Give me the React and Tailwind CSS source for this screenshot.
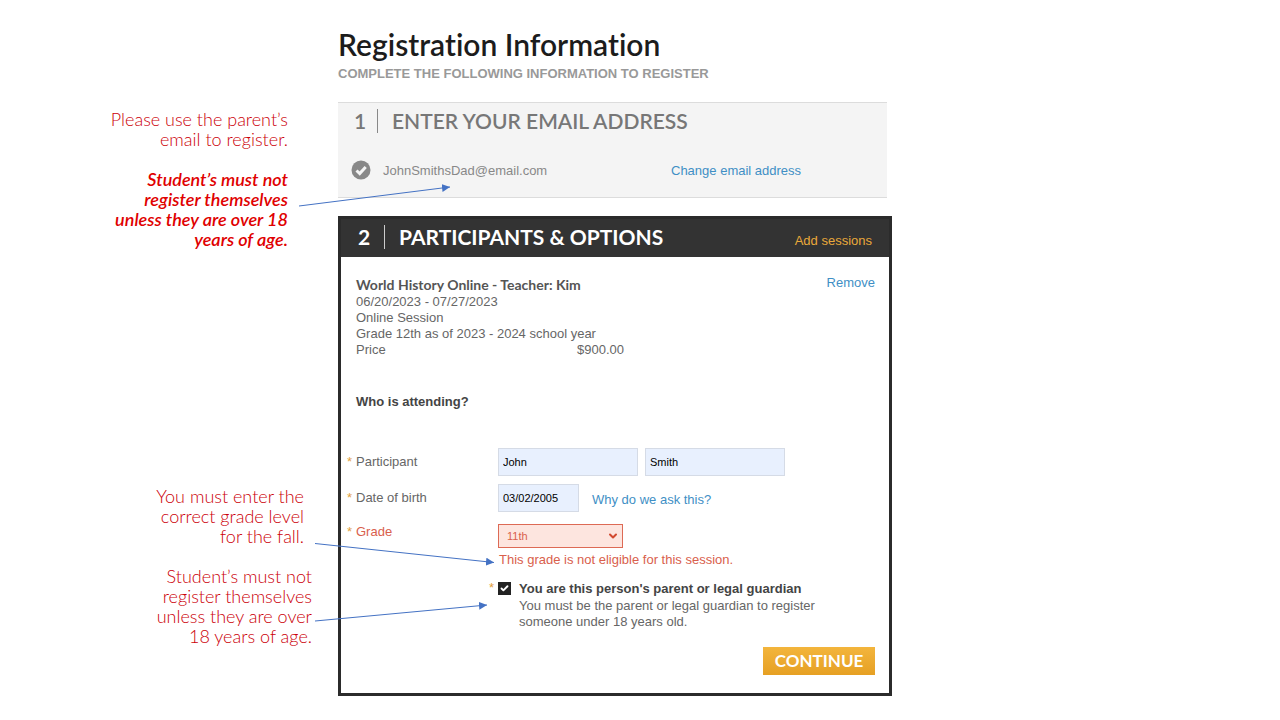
import React from "react";
import { ChevronDown, Check } from "lucide-react";

const heading = "font-['Lato',sans-serif] [font-variant-ligatures:none]";

function Note({ className, children }) {
  return (
    <p className={"text-right leading-5 " + className}>{children}</p>
  );
}

function Notes() {
  return (
    <aside className="w-[312px] shrink-0 pt-[109px] font-['Lato',sans-serif] text-lg font-light text-[#cc0008] [font-variant-ligatures:none]">
      <Note className="pr-6">
        Please use the parent’s
        <br />
        email to register.
      </Note>
      <Note className="mt-5 pr-6 font-semibold italic text-[#e00000]">
        Student’s must not
        <br />
        register themselves
        <br />
        unless they are over 18
        <br />
        years of age.
      </Note>
      <Note className="mt-[237px] pr-2">
        You must enter the
        <br />
        correct grade level
        <br />
        for the fall.
      </Note>
      <Note className="mt-5">
        Student’s must not
        <br />
        register themselves
        <br />
        unless they are over
        <br />
        18 years of age.
      </Note>
    </aside>
  );
}

function Arrows() {
  return (
    <svg
      className="pointer-events-none absolute left-0 top-0"
      width="520"
      height="640"
      viewBox="0 0 520 640"
      fill="none"
      stroke="#4472c4"
      strokeWidth="1"
      aria-hidden="true"
    >
      <defs>
        <marker id="head" markerWidth="8" markerHeight="8" refX="8" refY="4" orient="auto" markerUnits="userSpaceOnUse">
          <path d="M0 0L8 4L0 8Z" fill="#4472c4" stroke="none" />
        </marker>
      </defs>
      <path d="M299 206L450 187" markerEnd="url(#head)" />
      <path d="M315 543.500L494 562.500" markerEnd="url(#head)" />
      <path d="M315 621L487 605" markerEnd="url(#head)" />
    </svg>
  );
}

function Label({ htmlFor, error, children }) {
  return (
    <label
      htmlFor={htmlFor}
      className={"flex w-[157px] shrink-0 pl-[6px] " + (error ? "text-[#d9604c]" : "text-[#666]")}
    >
      <span className="w-[9px] text-[#e3a040]">*</span>
      {children}
    </label>
  );
}

const inputClass =
  "h-7 min-w-0 border border-[#d5dbe6] bg-[#e8f0fe] px-1 text-[11px] text-black outline-none";

export default function App() {
  return (
    <div className="relative flex min-h-screen bg-white font-['Liberation_Sans',Arial,sans-serif] text-[13px] leading-4 text-[#666]">
      <Notes />
      <main className="ml-[26px] max-w-[554px] flex-1 pb-6 pt-6">
        <h1 className={heading + " text-[30px] font-semibold leading-10 text-[#1c1c1c]"}>
          Registration Information
        </h1>
        <p className="font-bold uppercase leading-5 text-[#999]">
          Complete the following information to register
        </p>

        <section className="mr-[5px] mt-[18px] h-24 border-y border-[#dcdcdc] bg-[#f4f4f4]">
          <h2 className={heading + " flex h-9 items-center text-[21px] font-semibold text-[#777]"}>
            <span className="w-[39px] pl-4">1</span>
            <span className="h-6 w-[15px] border-l border-[#888]" />
            ENTER YOUR EMAIL ADDRESS
          </h2>
          <div className="mt-[21px] flex items-center text-[#888]">
            <svg className="ml-[13px] mr-3 h-5 w-5" viewBox="0 0 20 20" aria-hidden="true">
              <circle cx="10" cy="10" r="9.500" fill="#888" />
              <path d="M5.500 10.500L8.700 13.500L14.700 7" fill="none" stroke="#f4f4f4" strokeWidth="3" />
            </svg>
            <span className="w-[288px] pt-[2px]">JohnSmithsDad@email.com</span>
            <a href="#email" className="pt-[2px] text-[#3f8fc5]">
              Change email address
            </a>
          </div>
        </section>

        <section className="mt-[18px] border-[3px] border-[#2b2b2b] bg-white">
          <header className="flex h-[38px] items-center justify-between bg-[#333] pb-[2px] pr-[17px]">
            <h2 className={heading + " flex items-center text-[21px] font-bold text-white"}>
              <span className="w-[43px] pl-[17px]">2</span>
              <span className="h-6 w-[15px] border-l border-[#ccc]" />
              PARTICIPANTS &amp; OPTIONS
            </h2>
            <a href="#sessions" className="pt-2 text-[#eaa93a]">
              Add sessions
            </a>
          </header>

          <div className="pb-[18px] pr-[14px] pt-[18px]">
            <div className="pl-[15px]">
              <div className="flex justify-between">
                <h3 className={heading + " text-sm font-bold leading-[19px] text-[#555]"}>
                  World History Online - Teacher: Kim
                </h3>
                <a href="#remove" className="text-[#3f8fc5]">
                  Remove
                </a>
              </div>
              <p>06/20/2023 - 07/27/2023</p>
              <p>Online Session</p>
              <p>Grade 12th as of 2023 - 2024 school year</p>
              <p className="flex w-[268px] justify-between">
                <span>Price</span>
                <span>$900.00</span>
              </p>
              <h3 className="mt-[34px] font-bold leading-5 text-[#444]">Who is attending?</h3>
            </div>

            <form className="mt-9" onSubmit={(e) => e.preventDefault()}>
              <div className="flex items-center">
                <Label htmlFor="first">Participant</Label>
                <input id="first" className={inputClass + " w-[140px]"} defaultValue="John" />
                <input aria-label="Last name" className={inputClass + " ml-[7px] w-[140px]"} defaultValue="Smith" />
              </div>
              <div className="mt-2 flex items-center">
                <Label htmlFor="dob">Date of birth</Label>
                <input id="dob" className={inputClass + " w-[81px]"} defaultValue="03/02/2005" />
                <a href="#why" className="ml-[13px] pt-1 text-[#3f8fc5]">
                  Why do we ask this?
                </a>
              </div>
              <div className="mt-3 flex items-start">
                <Label htmlFor="grade" error>
                  Grade
                </Label>
                <div className="relative w-[125px]">
                  <select
                    id="grade"
                    defaultValue="11th"
                    className="block h-6 w-full appearance-none border border-[#dd6a55] bg-[#fde5df] px-2 text-[11px] text-[#d9604c] outline-none"
                  >
                    <option>11th</option>
                    <option>12th</option>
                  </select>
                  <ChevronDown className="pointer-events-none absolute right-1 top-[6px] h-3 w-3 text-[#d2492f]" strokeWidth={4} />
                </div>
              </div>
              <p className="mt-1 pl-[158px] text-[#d9604c]">This grade is not eligible for this session.</p>

              <div className="mt-3 flex pl-[148px]">
                <span className="w-[9px] text-[#e3a040]">*</span>
                <span className="relative mr-2 mt-[2px] h-[13px] w-[13px]">
                  <input
                    id="guardian"
                    type="checkbox"
                    defaultChecked
                    className="block h-[13px] w-[13px] appearance-none bg-[#222]"
                  />
                  <Check className="pointer-events-none absolute left-[2px] top-[2px] h-[9px] w-[9px] text-white" strokeWidth={5} />
                </span>
                <label htmlFor="guardian">
                  <strong className="block leading-[18px] text-[#444]">
                    You are this person's parent or legal guardian
                  </strong>
                  You must be the parent or legal guardian to register
                  <br />
                  someone under 18 years old.
                </label>
              </div>

              <div className="mt-[17px] flex justify-end">
                <button
                  type="submit"
                  className={heading + " h-7 w-28 bg-linear-to-b from-[#f3b53c] to-[#e6a023] text-[17px] font-bold leading-7 text-white"}
                >
                  CONTINUE
                </button>
              </div>
            </form>
          </div>
        </section>
      </main>
      <Arrows />
    </div>
  );
}
